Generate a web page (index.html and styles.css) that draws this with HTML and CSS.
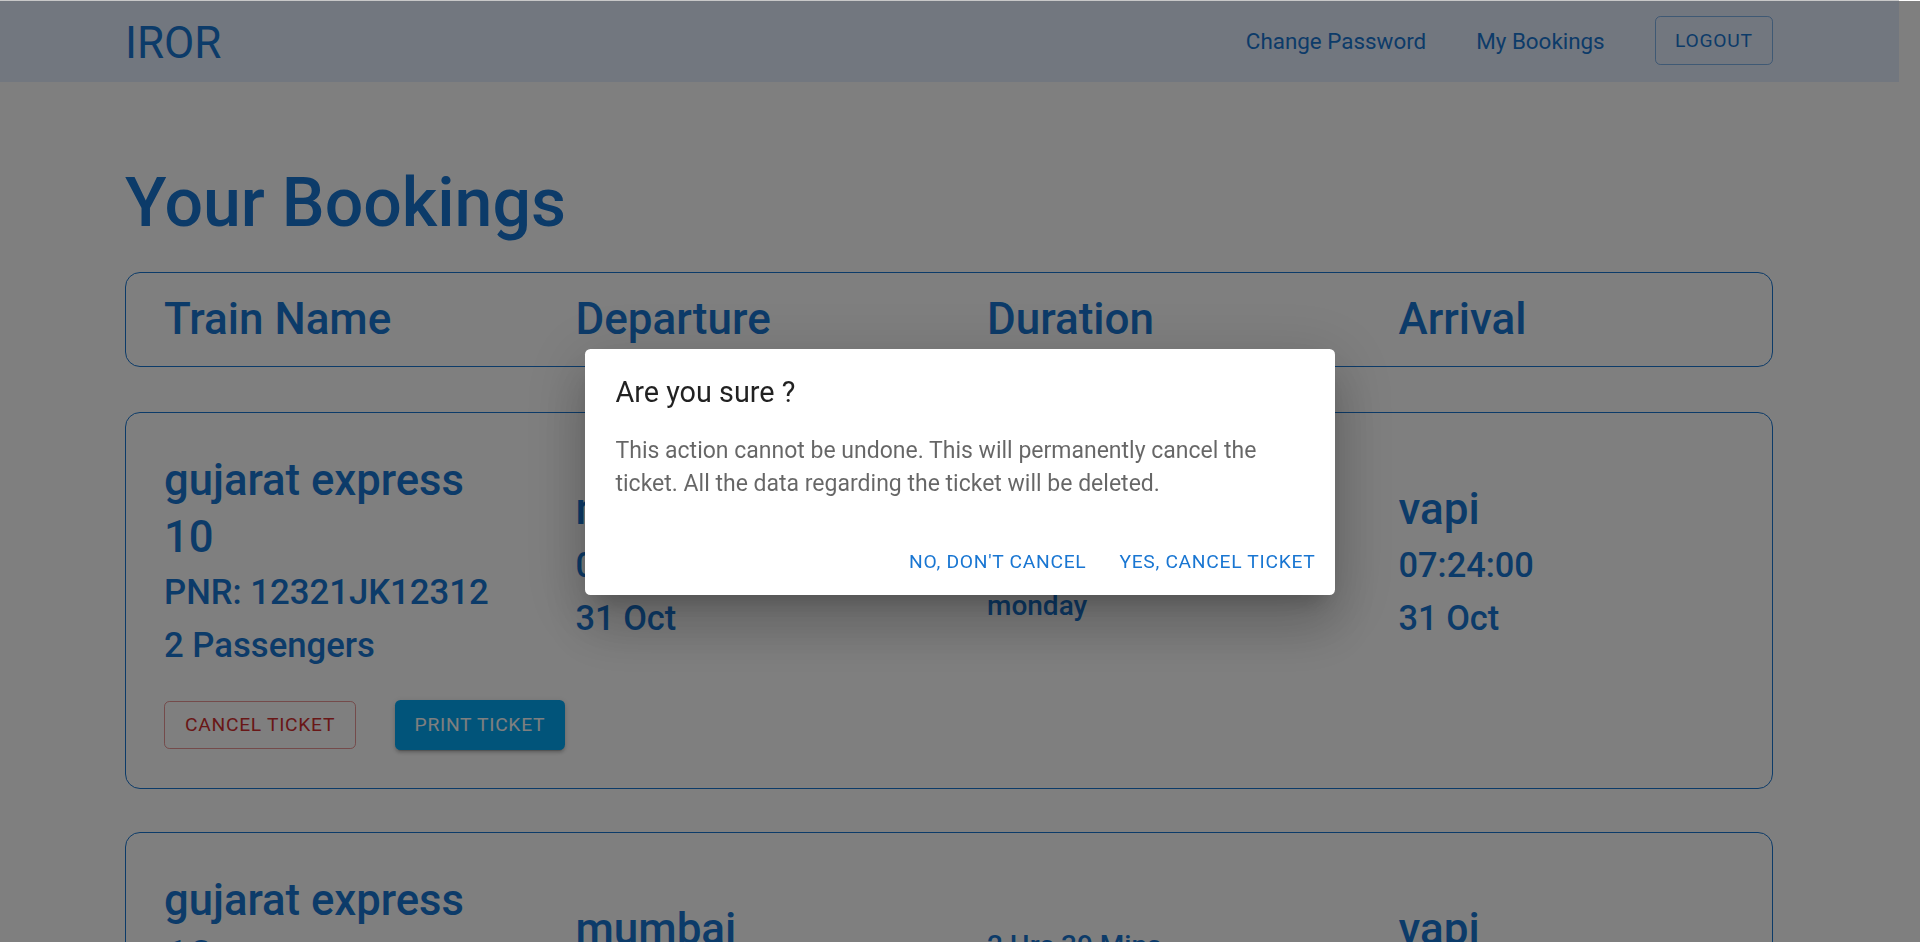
FILE: index.html
```html
<!DOCTYPE html>
<html lang="en">
<head>
<meta charset="utf-8">
<title>IROR - Your Bookings</title>
<link rel="stylesheet" href="styles.css">
</head>
<body>
<div class="topline"></div>
<header class="navbar">
  <div class="nav-inner">
    <div class="brand">IROR</div>
    <nav class="nav-links">
      <a class="nav-link" href="#">Change Password</a>
      <a class="nav-link" href="#">My Bookings</a>
      <button class="btn btn-outline-primary" type="button">Logout</button>
    </nav>
  </div>
</header>

<main class="page">
  <h1 class="page-title">Your Bookings</h1>

  <div class="table-head">
    <div class="col"><span class="head-label">Train Name</span></div>
    <div class="col"><span class="head-label">Departure</span></div>
    <div class="col"><span class="head-label">Duration</span></div>
    <div class="col"><span class="head-label">Arrival</span></div>
  </div>

  <section class="booking">
    <div class="booking-row">
      <div class="col col-train">
        <div class="train-name">gujarat express 10</div>
        <div class="sub-line">PNR: 12321JK12312</div>
        <div class="sub-line">2 Passengers</div>
      </div>
      <div class="col col-station">
        <div class="station">mumbai</div>
        <div class="time">04:45:00</div>
        <div class="date">31 Oct</div>
      </div>
      <div class="col col-duration">
        <div class="duration">2 Hrs 39 Mins</div>
        <div class="route-line"><span class="route-arrow"></span></div>
        <div class="duration">monday</div>
      </div>
      <div class="col col-station">
        <div class="station">vapi</div>
        <div class="time">07:24:00</div>
        <div class="date">31 Oct</div>
      </div>
    </div>
    <div class="booking-actions">
      <button class="btn btn-outline-error" type="button">Cancel Ticket</button>
      <button class="btn btn-contained-info" type="button">Print Ticket</button>
    </div>
  </section>

  <section class="booking">
    <div class="booking-row">
      <div class="col col-train">
        <div class="train-name">gujarat express 10</div>
        <div class="sub-line">PNR: 12321JK12312</div>
        <div class="sub-line">2 Passengers</div>
      </div>
      <div class="col col-station">
        <div class="station">mumbai</div>
        <div class="time">04:45:00</div>
        <div class="date">31 Oct</div>
      </div>
      <div class="col col-duration">
        <div class="duration">2 Hrs 39 Mins</div>
        <div class="route-line"><span class="route-arrow"></span></div>
        <div class="duration">monday</div>
      </div>
      <div class="col col-station">
        <div class="station">vapi</div>
        <div class="time">07:24:00</div>
        <div class="date">31 Oct</div>
      </div>
    </div>
    <div class="booking-actions">
      <button class="btn btn-outline-error" type="button">Cancel Ticket</button>
      <button class="btn btn-contained-info" type="button">Print Ticket</button>
    </div>
  </section>
</main>

<div class="backdrop">
  <div class="dialog" role="dialog" aria-labelledby="dlg-title">
    <h2 class="dialog-title" id="dlg-title">Are you sure ?</h2>
    <div class="dialog-content">
      <p class="dialog-text">This action cannot be undone. This will permanently cancel the ticket. All the data regarding the ticket will be deleted.</p>
    </div>
    <div class="dialog-actions">
      <button class="btn btn-text" type="button">No, don't cancel</button>
      <button class="btn btn-text" type="button">Yes, cancel ticket</button>
    </div>
  </div>
</div>
</body>
</html>
```

FILE: styles.css
```css
* { box-sizing: border-box; }

html, body {
  margin: 0;
  padding: 0;
  background: #ffffff;
}

body {
  font-family: Roboto, "Noto Sans", "Liberation Sans", Arial, sans-serif;
  color: #1976d2;
  padding-right: 21px;
  height: 942px;
  overflow: hidden;
}

.topline {
  height: 1px;
  background: #c8c8c8;
}

/* ---------- navbar ---------- */
.navbar {
  height: 81px;
  background: #e5eefe;
}

.nav-inner {
  height: 100%;
  display: flex;
  align-items: center;
  justify-content: space-between;
  padding: 0 126px 0 125px;
}

.brand {
  font-size: 44px;
  line-height: 46px;
  font-weight: 400;
  margin-top: 2px;
  color: #1976d2;
}

.nav-links {
  display: flex;
  align-items: center;
  gap: 50px;
}

.nav-link {
  font-size: 22.4px;
  line-height: 33px;
  color: #1976d2;
  text-decoration: none;
}

/* ---------- buttons ---------- */
.btn {
  font-family: inherit;
  font-weight: 400;
  font-size: 19.25px;
  line-height: 33.7px;
  letter-spacing: 0.7px;
  text-transform: uppercase;
  border-radius: 5.5px;
  background: transparent;
  border: 1px solid transparent;
  cursor: pointer;
  margin: 0;
}

.btn-outline-primary {
  color: #1976d2;
  border-color: rgba(25, 118, 210, 0.5);
  padding: 6.9px 19.4px;
  margin-top: -2px;
}

.btn-outline-error {
  color: #d32f2f;
  border-color: rgba(211, 47, 47, 0.5);
  padding: 6.4px 20px;
}

.btn-contained-info {
  color: #ffffff;
  background: #03a9f4;
  border: 0;
  padding: 8.25px 19.5px;
  box-shadow: 0 4px 1px -3px rgba(0,0,0,0.2), 0 3px 3px 0 rgba(0,0,0,0.14), 0 1px 7px 0 rgba(0,0,0,0.12);
}

.btn-text {
  color: #1976d2;
  border: 0;
  padding: 8.25px 11px;
}

/* ---------- page ---------- */
.page {
  padding: 0 126px 0 125px;
}

.page-title {
  margin: 80px 0 28px;
  font-size: 68px;
  line-height: 82px;
  font-weight: 500;
  color: #1976d2;
}

.table-head {
  height: 95px;
  border: 1px solid #1976d2;
  border-radius: 15px;
  display: grid;
  grid-template-columns: repeat(4, 1fr);
  align-items: center;
  margin-bottom: 45px;
}

.col {
  padding-left: 38px;
  padding-right: 38px;
}

.head-label {
  display: block;
  font-size: 44px;
  line-height: 57px;
  font-weight: 500;
}

.booking {
  border: 1px solid #1976d2;
  border-radius: 15px;
  padding: 39px 0 38px;
  margin-bottom: 43px;
}

.booking-row {
  display: grid;
  grid-template-columns: repeat(4, 1fr);
  align-items: center;
  font-weight: 500;
}

.train-name {
  font-size: 43.6px;
  line-height: 57px;
}

.sub-line {
  font-size: 34.7px;
  line-height: 53px;
}

.station {
  font-size: 44px;
  line-height: 57px;
}

.time {
  font-size: 34.4px;
  line-height: 55px;
}

.date {
  font-size: 34.4px;
  line-height: 51px;
}

.col-duration {
  padding-top: 8px;
}

.duration {
  font-size: 28px;
  line-height: 40px;
}

.route-line {
  height: 40px;
  display: flex;
  align-items: center;
}

.route-arrow {
  display: block;
  width: 200px;
  height: 2px;
  background: #1976d2;
}

.booking-actions {
  display: flex;
  align-items: center;
  gap: 39px;
  margin-top: 28px;
  padding-left: 38px;
  height: 50px;
}

/* ---------- modal ---------- */
.backdrop {
  position: fixed;
  top: 1px;
  left: 0;
  right: 0;
  bottom: 0;
  background: rgba(0, 0, 0, 0.5);
  display: flex;
  align-items: center;
  justify-content: center;
}

.dialog {
  width: 750px;
  background: #ffffff;
  border-radius: 5.5px;
  box-shadow: 0 15px 21px -10px rgba(0,0,0,0.2), 0 33px 52px 4px rgba(0,0,0,0.14), 0 12px 63px 11px rgba(0,0,0,0.12);
  margin-top: 1px;
}

.dialog-title {
  margin: 0;
  padding: 21px 30.5px 20px;
  font-size: 28.8px;
  line-height: 44px;
  font-weight: 400;
  color: rgba(0, 0, 0, 0.87);
}

.dialog-content {
  padding: 0 30.5px 23px;
}

.dialog-text {
  margin: 0;
  font-size: 23px;
  line-height: 33px;
  font-weight: 400;
  color: rgba(0, 0, 0, 0.6);
}

.dialog-actions {
  display: flex;
  justify-content: flex-end;
  align-items: center;
  gap: 11px;
  padding: 14px 8.5px 8px;
  height: 72px;
}
```
